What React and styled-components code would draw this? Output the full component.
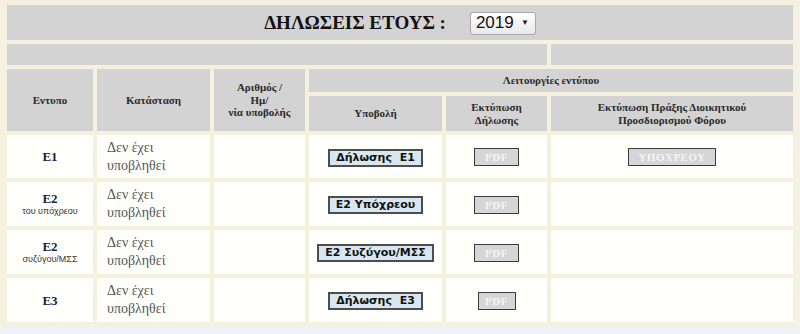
import React from "react";
import styled, { createGlobalStyle } from "styled-components";

const Global = createGlobalStyle`
	html, body {
		margin: 0;
		padding: 0;
		background: #eef2f5;
	}
	body {
		font-family: "Liberation Serif", "Times New Roman", serif;
	}
`;

const forms = [
	{ code: "Ε1", note: "", submit: "Δήλωσης  Ε1", act: true, height: 43 },
	{ code: "Ε2", note: "του υπόχρεου", submit: "Ε2 Υπόχρεου", act: false, height: 44 },
	{ code: "Ε2", note: "συζύγου/ΜΣΣ", submit: "Ε2 Συζύγου/ΜΣΣ", act: false, height: 44 },
	{ code: "Ε3", note: "", submit: "Δήλωσης  Ε3", act: false, height: 44, narrowPdf: true },
];

export default function App() {
	return (
		<Page>
			<Global />
			<Grid>
				<colgroup>
					<col style={{ width: 86 }} />
					<col style={{ width: 113 }} />
					<col style={{ width: 91 }} />
					<col style={{ width: 133 }} />
					<col style={{ width: 101 }} />
					<col style={{ width: 242 }} />
				</colgroup>
				<tbody>
					<Row $h={35}>
						<TitleCell colSpan={6}>
							<Title>
								ΔΗΛΩΣΕΙΣ ΕΤΟΥΣ :
								<YearSelect>
									2019
									<Caret>▼</Caret>
								</YearSelect>
							</Title>
						</TitleCell>
					</Row>
					<Row $h={21}>
						<HeadCell colSpan={5} />
						<HeadCell />
					</Row>
					<Row $h={23}>
						<HeadCell rowSpan={2}>Εντυπο</HeadCell>
						<HeadCell rowSpan={2}>Κατάσταση</HeadCell>
						<HeadCell rowSpan={2}>
							Αριθμός /<br />
							Ημ/
							<br />
							νία υποβολής
						</HeadCell>
						<HeadCell colSpan={3}>Λειτουργίες εντύπου</HeadCell>
					</Row>
					<Row $h={35}>
						<HeadCell>Υποβολή</HeadCell>
						<HeadCell>
							Εκτύπωση
							<br />
							Δήλωσης
						</HeadCell>
						<HeadCell>
							Εκτύπωση Πράξης Διοικητικού
							<br />
							Προσδιορισμού Φόρου
						</HeadCell>
					</Row>
					{forms.map((f, i) => (
						<Row key={i} $h={f.height}>
							<BodyCell>
								<FormCode>{f.code}</FormCode>
								{f.note && <FormNote>{f.note}</FormNote>}
							</BodyCell>
							<BodyCell $left>
								<Status>
									Δεν έχει
									<br />
									υποβληθεί
								</Status>
							</BodyCell>
							<BodyCell />
							<BodyCell>
								<SubmitButton>{f.submit}</SubmitButton>
							</BodyCell>
							<BodyCell>
								<GreyButton $w={f.narrowPdf ? 38 : 45}>PDF</GreyButton>
							</BodyCell>
							<BodyCell>{f.act && <GreyButton $w={88}>ΥΠΟΧΡΕΟΥ</GreyButton>}</BodyCell>
						</Row>
					))}
				</tbody>
			</Grid>
		</Page>
	);
}

const Page = styled.div`
	width: 797px;
	padding: 1px 0 0 0;
	background: #f6f1de;
`;

const Grid = styled.table`
	table-layout: fixed;
	width: 794px;
	margin-left: 3px;
	border-spacing: 4px;
`;

const Row = styled.tr`
	height: ${(p) => p.$h}px;
`;

const HeadCell = styled.th`
	padding: 0;
	background: #d3d3d3;
	color: #2b2b2b;
	font-family: "Liberation Serif", "Times New Roman", serif;
	font-size: 11px;
	font-weight: bold;
	line-height: 12.5px;
	text-align: center;
	vertical-align: middle;
`;

const TitleCell = styled(HeadCell)`
	padding-top: 1px;
`;

const Title = styled.div`
	display: flex;
	align-items: center;
	justify-content: center;
	gap: 24px;
	color: #111;
	font-size: 19px;
	line-height: 22px;
`;

const YearSelect = styled.div`
	display: flex;
	align-items: center;
	justify-content: space-between;
	box-sizing: border-box;
	width: 66px;
	height: 23px;
	padding: 0 6px 0 5px;
	border: 1px solid #a8a8a8;
	border-radius: 3px;
	background: linear-gradient(#ffffff, #e9e9e9);
	color: #111;
	font-family: "Liberation Sans", Arial, sans-serif;
	font-size: 17px;
	font-weight: normal;
`;

const Caret = styled.span`
	font-size: 8px;
	color: #222;
`;

const BodyCell = styled.td`
	padding: 0 0 0 ${(p) => (p.$left ? "10px" : "0")};
	background: #fffffc;
	text-align: ${(p) => (p.$left ? "left" : "center")};
	vertical-align: middle;
`;

const FormCode = styled.div`
	color: #22223a;
	font-family: "Liberation Serif", "Times New Roman", serif;
	font-size: 13px;
	font-weight: bold;
	line-height: 15px;
`;

const FormNote = styled.div`
	color: #333;
	font-family: "Liberation Sans", Arial, sans-serif;
	font-size: 9px;
	line-height: 11px;
`;

const Status = styled.div`
	color: #555;
	font-family: "Liberation Serif", "Times New Roman", serif;
	font-size: 14px;
	line-height: 18px;
`;

const SubmitButton = styled.button`
	box-sizing: border-box;
	min-width: 94px;
	height: 18px;
	padding: 0 6px;
	border: 2px solid #4d4d4d;
	background: #d8e7ef;
	color: #111;
	font-family: "DejaVu Sans", Verdana, sans-serif;
	font-size: 11px;
	font-weight: bold;
	line-height: 14px;
	white-space: pre;
`;

const GreyButton = styled.button`
	box-sizing: border-box;
	width: ${(p) => p.$w}px;
	height: 18px;
	padding: 0;
	border: 1px solid #3a3a3a;
	background: #d6d6d6;
	color: #f4f4f4;
	font-family: "Liberation Serif", "Times New Roman", serif;
	font-size: 11px;
	font-weight: bold;
	letter-spacing: 0.5px;
	line-height: 16px;
`;
